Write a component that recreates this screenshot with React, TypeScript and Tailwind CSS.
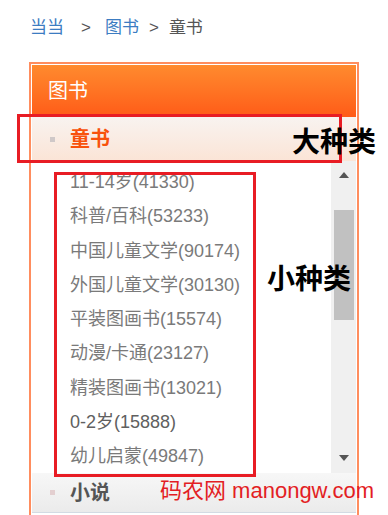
export default function App() {
  const items = [
    "11-14岁(41330)",
    "科普/百科(53233)",
    "中国儿童文学(90174)",
    "外国儿童文学(30130)",
    "平装图画书(15574)",
    "动漫/卡通(23127)",
    "精装图画书(13021)",
    "0-2岁(15888)",
    "幼儿启蒙(49847)",
  ];

  return (
    <div className="relative h-[515px] w-[388px] overflow-hidden bg-white font-['Liberation_Sans','Noto_Sans_CJK_SC',sans-serif]">
      {/* breadcrumb */}
      <div className="flex h-[62px] items-start pl-[30px] pt-[16px] text-[17px] leading-[24px] text-[#555]">
        <span className="text-[#3c7cc2]">当当</span>
        <span className="ml-[17px] mr-[14px]">&gt;</span>
        <span className="text-[#3c7cc2]">图书</span>
        <span className="mx-[10px]">&gt;</span>
        <span>童书</span>
      </div>

      <div className="ml-[29px] w-[330px] border-2 border-[#ff8d5e] bg-white p-px">
        <div className="flex h-[52px] items-center bg-gradient-to-b from-[#ff8a2e] to-[#ff5a17] pl-[16px] text-[20px] text-white">
          图书
        </div>

        <div className="flex h-[44px] items-center bg-gradient-to-b from-[#f8f3f0] to-[#fbe4d6] pl-[18px]">
          <span className="h-[5px] w-[5px] bg-[#cfc8c8]" />
          <span className="ml-[15px] text-[20px] font-bold text-[#f8520c]">童书</span>
        </div>

        <div className="flex h-[312px]">
          <ul className="flex-1 overflow-hidden pl-[38px] pt-[4px] text-[18px] leading-[34.3px] text-[#7a7a7a]">
            {items.map((t) => (
              <li key={t} className={t.startsWith("0-2") ? "text-[#606060]" : ""}>
                {t}
              </li>
            ))}
          </ul>
          <div className="flex w-[25px] flex-col bg-[#f0f0f0]">
            <div className="flex h-[28px] items-center justify-center pl-px">
              <svg width="10" height="6" viewBox="0 0 10 6">
                <polygon points="5,0 10,6 0,6" fill="#555" />
              </svg>
            </div>
            <div className="ml-[3px] mr-[2px] mt-[21px] h-[110px] bg-[#c1c1c1]" />
            <div className="flex-1" />
            <div className="flex h-[30px] items-center justify-center pl-px">
              <svg width="10" height="6" viewBox="0 0 10 6">
                <polygon points="0,0 10,0 5,6" fill="#555" />
              </svg>
            </div>
          </div>
        </div>

        <div className="flex h-[40px] items-center border-b border-[#d3dbe3] bg-gradient-to-b from-[#f7f7f7] to-[#ebebeb] pl-[18px]">
          <span className="h-[5px] w-[5px] bg-[#e3cfd0]" />
          <span className="ml-[15px] text-[20px] font-bold text-[#555]">小说</span>
        </div>
        <div className="h-[20px]" />
      </div>

      {/* annotations */}
      <div className="absolute left-[17px] top-[114px] h-[49px] w-[325px] border-[3px] border-[#e81c24]" />
      <div className="absolute left-[54px] top-[172px] h-[305px] w-[202px] border-[3px] border-[#e81c24]" />
      <div className="absolute left-[292px] top-[129px] text-[28px] font-bold leading-none text-black">大种类</div>
      <div className="absolute left-[267px] top-[266px] text-[28px] font-bold leading-none text-black">小种类</div>
      <div className="absolute left-[160px] top-[480px] text-[22px] leading-none text-[#e31e24]">码农网 manongw.com</div>
    </div>
  );
}
